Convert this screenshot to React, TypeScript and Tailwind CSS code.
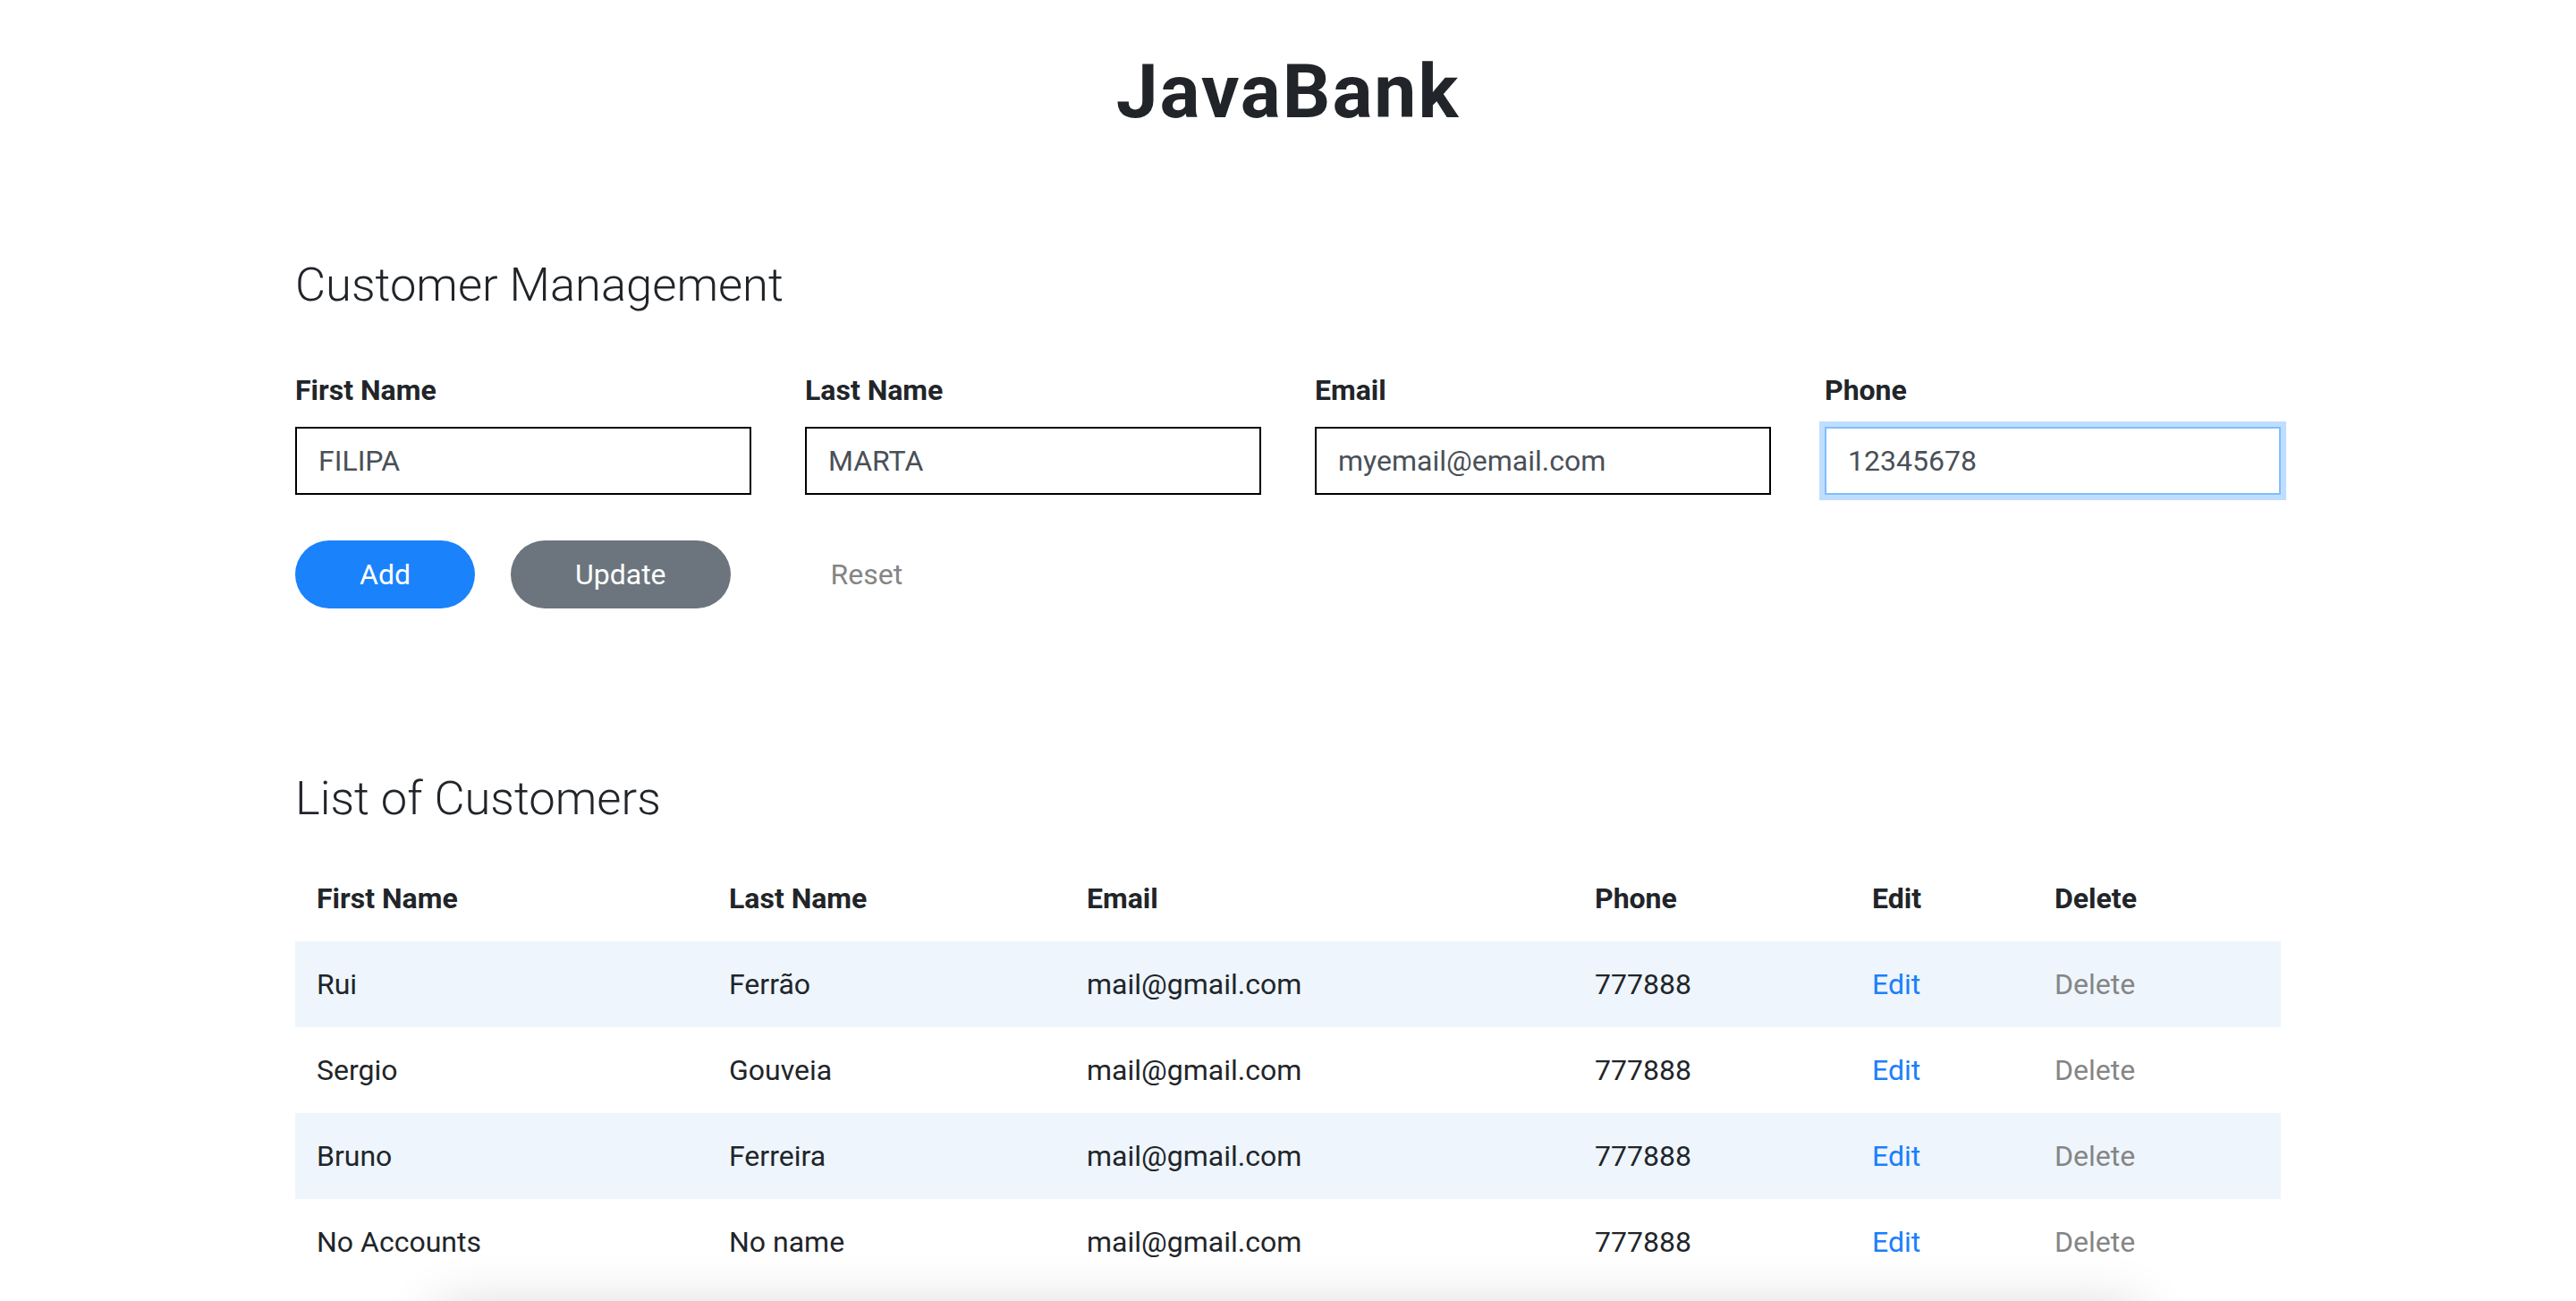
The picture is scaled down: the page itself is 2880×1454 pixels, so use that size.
import React from 'react';

const customers = [
    { first: 'Rui', last: 'Ferrão', email: 'mail@gmail.com', phone: '777888' },
    { first: 'Sergio', last: 'Gouveia', email: 'mail@gmail.com', phone: '777888' },
    { first: 'Bruno', last: 'Ferreira', email: 'mail@gmail.com', phone: '777888' },
    { first: 'No Accounts', last: 'No name', email: 'mail@gmail.com', phone: '777888' },
];

const fields = [
    { label: 'First Name', value: 'FILIPA', focused: false },
    { label: 'Last Name', value: 'MARTA', focused: false },
    { label: 'Email', value: 'myemail@email.com', focused: false },
    { label: 'Phone', value: '12345678', focused: true },
];

function Field({ label, value, focused }: { label: string; value: string; focused: boolean }) {
    return (
        <div className="flex flex-col">
            <label className="text-[32px] leading-[48px] font-bold text-[#212529]">{label}</label>
            <input
                readOnly
                value={value}
                className={
                    focused
                        ? 'mt-[17px] h-[76px] w-full border-2 border-[#80bdff] bg-white px-[24px] text-[32px] text-[#495057] outline-none shadow-[0_0_0_6px_rgba(0,123,255,0.25)]'
                        : 'mt-[17px] h-[76px] w-full border-2 border-black bg-white px-[24px] text-[32px] text-[#495057] outline-none'
                }
            />
        </div>
    );
}

export default function App() {
    return (
        <div className="min-h-screen bg-white font-['Roboto','Liberation_Sans',sans-serif] text-[#212529]">
            <header className="pt-[53px] text-center">
                <h1 className="text-[84px] leading-[100px] font-bold tracking-[2px] text-[#212529]">JavaBank</h1>
            </header>

            <main className="mx-auto w-[2220px]">
                <section className="mt-[134px]">
                    <h2 className="text-[52.5px] leading-[62px] font-light">Customer Management</h2>
                    <div className="mt-[63px] grid grid-cols-4 gap-x-[60px]">
                        {fields.map((f) => (
                            <Field key={f.label} {...f} />
                        ))}
                    </div>
                    <div className="mt-[51px] flex gap-[40px]">
                        <button className="h-[76px] rounded-full bg-[#1a82fb] px-[72px] text-[32px] text-white">Add</button>
                        <button className="h-[76px] rounded-full bg-[#6c757d] px-[72px] text-[32px] text-white">Update</button>
                        <button className="h-[76px] rounded-full px-[72px] text-[32px] text-[#858585]">Reset</button>
                    </div>
                </section>

                <section className="mt-[181px]">
                    <h2 className="text-[52.5px] leading-[62px] font-light">List of Customers</h2>
                    <table className="mt-[33px] w-full table-fixed border-collapse text-left text-[32px]">
                        <colgroup>
                            <col className="w-[461px]" />
                            <col className="w-[400px]" />
                            <col className="w-[568px]" />
                            <col className="w-[310px]" />
                            <col className="w-[204px]" />
                            <col className="w-[277px]" />
                        </colgroup>
                        <thead>
                            <tr className="h-[96px] font-bold">
                                <th className="pl-[24px]">First Name</th>
                                <th className="pl-[24px]">Last Name</th>
                                <th className="pl-[24px]">Email</th>
                                <th className="pl-[24px]">Phone</th>
                                <th className="pl-[24px]">Edit</th>
                                <th className="pl-[24px]">Delete</th>
                            </tr>
                        </thead>
                        <tbody>
                            {customers.map((c, i) => (
                                <tr key={c.first} className={i % 2 === 0 ? 'h-[96px] bg-[#eef5fd]' : 'h-[96px] bg-white'}>
                                    <td className="pl-[24px]">{c.first}</td>
                                    <td className="pl-[24px]">{c.last}</td>
                                    <td className="pl-[24px]">{c.email}</td>
                                    <td className="pl-[24px]">{c.phone}</td>
                                    <td className="pl-[24px] text-[#1a80fb]">Edit</td>
                                    <td className="pl-[24px] text-[#858585]">Delete</td>
                                </tr>
                            ))}
                        </tbody>
                    </table>
                </section>
            </main>

            {/* card below the fold, only its shadow shows */}
            <div className="mx-auto mt-[30px] h-[400px] w-[1900px] bg-white shadow-[0_0_60px_rgba(0,0,0,0.2)]"></div>
        </div>
    );
}
